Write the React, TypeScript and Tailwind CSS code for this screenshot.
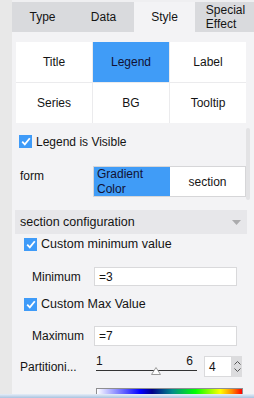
import React, { useState } from 'react';

const tabs = ['Type', 'Data', 'Style', 'Special Effect'];
const sections = ['Title', 'Legend', 'Label', 'Series', 'BG', 'Tooltip'];

// Checkbox bleu coché
const Check = () => (
  <span className="w-[13px] h-[13px] bg-[#3f9bf8] flex items-center justify-center shrink-0">
    <svg width="10" height="9" viewBox="0 0 10 9" fill="none">
      <path d="M1.2 4.6 L3.8 7.3 L8.8 1.2" stroke="#ffffff" strokeWidth="1.8" />
    </svg>
  </span>
);

export default function App() {
  const [activeTab] = useState('Style');
  const [activeSection] = useState('Legend');

  return (
    <div
      className="w-[254px] h-[398px] flex flex-col overflow-hidden bg-[#e8e8e8] text-[12px] text-[#141414]"
      style={{ fontFamily: '"Liberation Sans", Arial, sans-serif' }}
    >
      <div className="flex h-[394px] relative">
        <div className="w-[12px] shrink-0 bg-[#e8e8e8]" />
        <div className="flex-1 flex flex-col bg-[#f3f3f5]">
          <div className="h-[2px] bg-[#efeff1]" />

          {/* Tabs */}
          <div className="h-[30px] flex bg-[#d9dadd]">
            {tabs.map((t) => (
              <div
                key={t}
                className={`w-[61px] shrink-0 flex items-center justify-center text-center leading-[14px] px-1 ${
                  activeTab === t ? 'bg-[#f3f3f5]' : ''
                }`}
              >
                {t === 'Special Effect' ? (
                  <span className="text-left">
                    Special
                    <br />
                    Effect
                  </span>
                ) : (
                  t
                )}
              </div>
            ))}
          </div>

          {/* Grille des sections */}
          <div className="mt-[10px] ml-[4px] w-[230px] grid grid-cols-3 gap-px bg-[#ebebed]">
            {sections.map((s) => (
              <div
                key={s}
                className={`h-[40px] flex items-center justify-center ${
                  activeSection === s ? 'bg-[#409cf7] text-[#111133]' : 'bg-white'
                }`}
              >
                {s}
              </div>
            ))}
          </div>

          <div className="mt-[12px] ml-[7px] h-[13px] flex items-center gap-[4px]">
            <Check />
            <span>Legend is Visible</span>
          </div>

          {/* form */}
          <div className="mt-[18px] flex">
            <div className="w-[81px] pl-[8px] pt-[1px]">form</div>
            <div className="w-[153px] h-[31px] flex border border-[#d6d6d8] bg-white">
              <div className="w-[76px] bg-[#409cf7] px-[3px] leading-[15px] text-[#111133]">
                Gradient
                <br />
                Color
              </div>
              <div className="flex-1 flex items-center justify-center">section</div>
            </div>
          </div>

          {/* section configuration */}
          <div className="mt-[13px] ml-[3px] w-[232px] h-[24px] flex items-center justify-between pl-[5px] pr-[6px] bg-[#e7e7ea]">
            <span className="text-[12.5px]">section configuration</span>
            <svg width="9" height="5" viewBox="0 0 9 5">
              <path d="M0 0 L9 0 L4.5 5 Z" fill="#ababad" />
            </svg>
          </div>

          <div className="mt-[4px] ml-[12px] h-[13px] flex items-center gap-[4px]">
            <Check />
            <span className="text-[12.5px]">Custom minimum value</span>
          </div>

          <div className="mt-[16px] flex items-center">
            <div className="w-[82px] pl-[20px]">Minimum</div>
            <div className="w-[143px] h-[19px] bg-white border border-[#d9d9db] flex items-center pl-[4px]">
              =3
            </div>
          </div>

          <div className="mt-[12px] ml-[12px] h-[13px] flex items-center gap-[4px]">
            <Check />
            <span className="text-[12.5px]">Custom Max Value</span>
          </div>

          <div className="mt-[15px] flex items-center">
            <div className="w-[82px] pl-[20px]">Maximum</div>
            <div className="w-[143px] h-[20px] bg-white border border-[#d9d9db] flex items-center pl-[4px]">
              =7
            </div>
          </div>

          {/* Partitioning */}
          <div className="mt-[10px] flex items-center h-[21px]">
            <div className="w-[84px] pl-[8px]">Partitioni...</div>
            <div className="w-[101px] h-[21px] relative">
              <span className="absolute left-0 top-[-1px] leading-none">1</span>
              <span className="absolute right-[4px] top-[-1px] leading-none">6</span>
              <div className="absolute left-0 right-0 top-[14px] h-px bg-[#333]" />
              <svg className="absolute left-[55px] top-[11px]" width="10" height="8" viewBox="0 0 10 8">
                <path d="M5 0.5 L9.5 7.5 L0.5 7.5 Z" fill="#fff" stroke="#9a9a9a" />
              </svg>
            </div>
            <div className="ml-[7px] flex h-[21px]">
              <div className="w-[28px] bg-white border border-[#dadadc] flex items-center pl-[4px]">4</div>
              <div className="w-[10px] bg-[#dcdcde] flex flex-col items-center justify-center gap-[3px]">
                <svg width="7" height="4" viewBox="0 0 7 4">
                  <path d="M0.5 3.5 L3.5 0.5 L6.5 3.5" stroke="#555" fill="none" />
                </svg>
                <svg width="7" height="4" viewBox="0 0 7 4">
                  <path d="M0.5 0.5 L3.5 3.5 L6.5 0.5" stroke="#555" fill="none" />
                </svg>
              </div>
            </div>
          </div>

          <div
            className="mt-[11px] ml-[84px] w-[147px] h-[6px] border border-b-0 border-[#8e8e90]"
            style={{
              background:
                'linear-gradient(to right, #ffffff 0%, #0000ff 30%, #00008b 38%, #008b8b 52%, #00ff00 68%, #ffff00 85%, #ff8c00 93%, #ff0000 100%)',
            }}
          />
        </div>

        {/* scrollbar */}
        <div className="absolute left-[246px] top-[128px] w-[4px] h-[72px] rounded-full bg-[#e3e3e5]" />
      </div>
      <div className="h-[4px] bg-gradient-to-b from-[#e6eef8] to-[#a9c3df]" />
    </div>
  );
}
